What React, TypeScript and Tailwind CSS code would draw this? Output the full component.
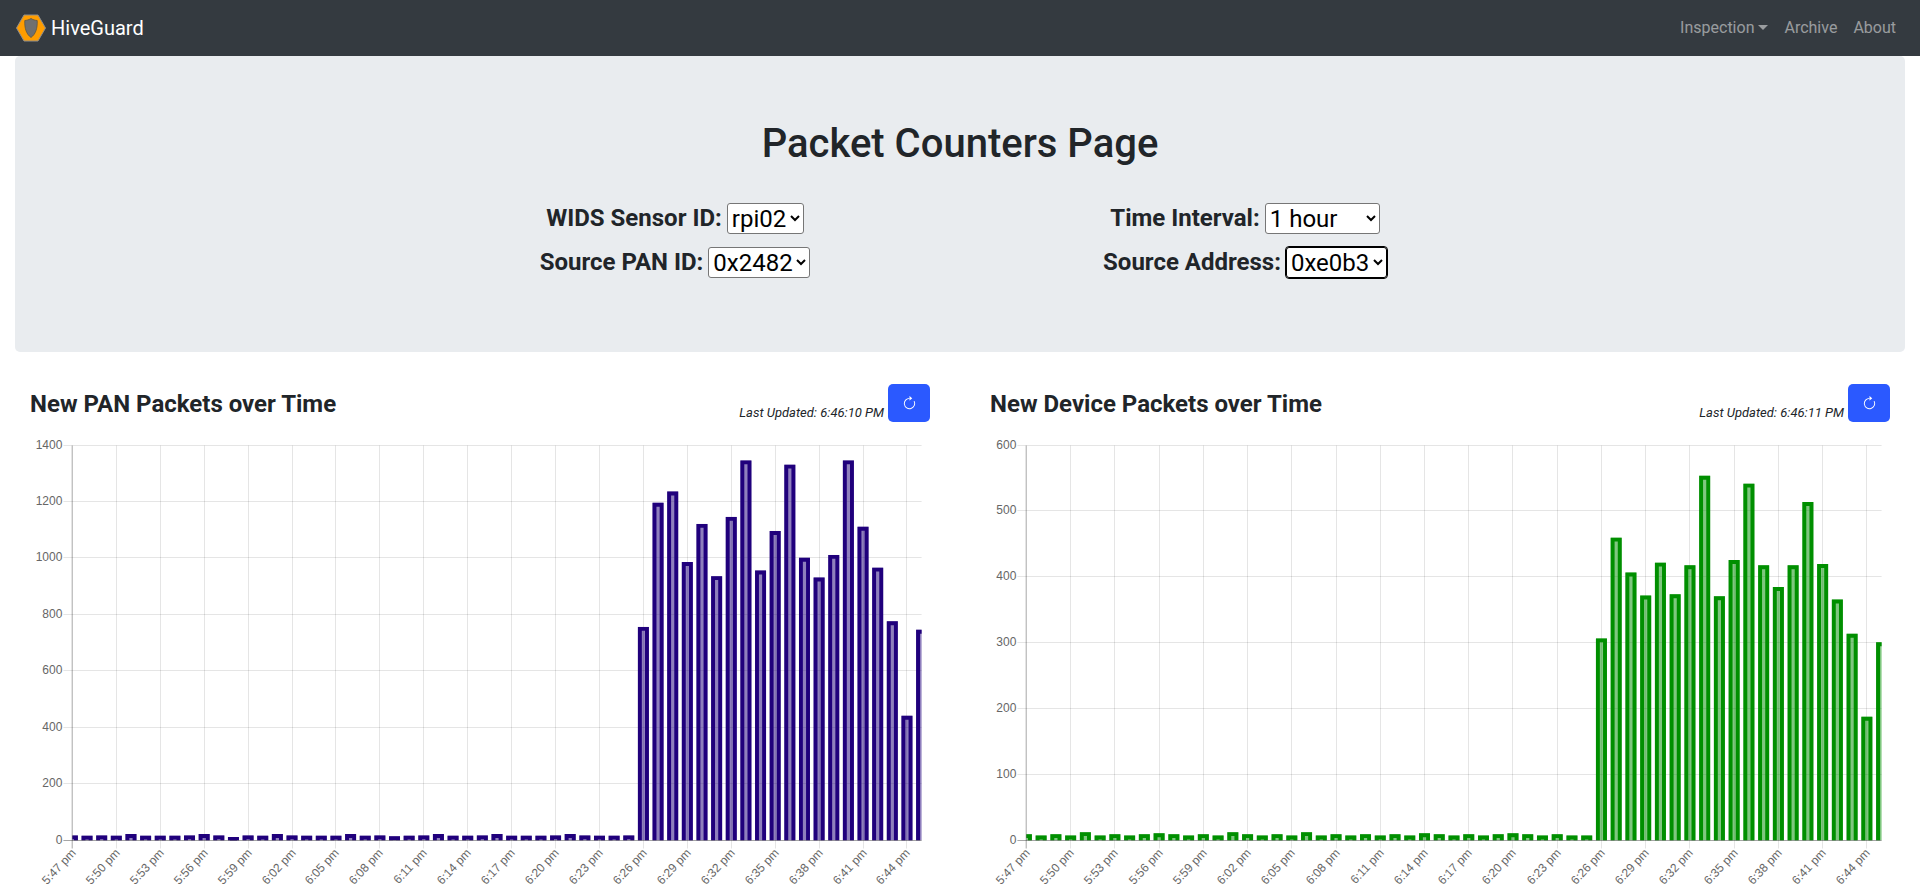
import { BsArrowClockwise } from "react-icons/bs";

type ChartProps = {
  title: string;
  updated: string;
  values: number[];
  max: number;
  step: number;
  axisX: number;
  color: string;
  fill: string;
  id: string;
};

const panValues = [
  18, 17, 18, 17, 23, 17, 17, 17, 18, 23, 18, 12, 18, 17, 23, 18, 17, 17, 17, 23, 17, 18, 15, 17, 18, 23, 17, 17,
  18, 23, 17, 17, 17, 18, 23, 18, 17, 17, 18, 757, 1197, 1237, 987, 1122, 937, 1147, 1347, 957, 1097, 1332, 1002,
  932, 1012, 1347, 1112, 967, 777, 442, 747,
];

const deviceValues = [
  9.6, 7.6, 9.6, 7.6, 12.6, 7.6, 9.6, 7.6, 9.6, 11, 9.6, 7.6, 9.6, 7.6, 12.6, 9.6, 7.6, 9.6, 7.6, 12.6, 7.6, 9.6,
  7.6, 9.6, 7.6, 9.6, 7.6, 11, 9.6, 7.6, 9.6, 7.6, 9.6, 11, 9.6, 7.6, 9.6, 7.6, 7.6, 307, 460, 407, 372, 422, 374,
  418, 554, 371, 426, 542, 418, 385, 418, 514, 420, 366, 314, 188, 301,
];

const TOP = 15.5;
const BOTTOM = 410.5;
const RIGHT = 891.6;

const timeLabel = (index: number) => {
  const total = 47 + index;
  if (total < 60) return `5:${String(total).padStart(2, "0")} pm`;
  return `6:${String(total - 60).padStart(2, "0")} pm`;
};

const PacketChart = ({ title, updated, values, max, step, axisX, color, fill, id }: ChartProps) => {
  const slot = (RIGHT - axisX) / (values.length - 1);
  const yTicks: number[] = [];
  for (let v = 0; v <= max; v += step) yTicks.push(v);
  const toY = (v: number) => BOTTOM - (v / max) * (BOTTOM - TOP);

  return (
    <div className="w-1/2 px-[30px]">
      <div className="flex h-[38px] items-end justify-between">
        <h3 className="mt-[2px] self-center text-2xl font-bold text-[#212529]">{title}</h3>
        <div className="flex items-end gap-[4px]">
          <span className="text-[13px] italic leading-[18px] text-[#212529]">Last Updated: {updated}</span>
          <button type="button" className="flex h-[38px] w-[42px] items-center justify-center rounded-[5px] bg-[#2b59ff] text-white">
            <BsArrowClockwise size={15} />
          </button>
        </div>
      </div>
      <svg width={900} height={470} className="mt-[8px] block font-['Liberation_Sans',sans-serif]">
        <defs>
          <clipPath id={id}>
            <rect x={axisX} y={0} width={RIGHT - axisX} height={BOTTOM} />
          </clipPath>
        </defs>
        {yTicks.map((v) => {
          const y = Math.floor(toY(v) - 0.5) + 0.5;
          return (
            <g key={v}>
              {v > 0 && <line x1={axisX - 9} x2={RIGHT} y1={y} y2={y} stroke="rgba(0,0,0,0.1)" />}
              <text x={axisX - 10} y={y + 3.5} textAnchor="end" className="fill-[#666666] text-xs">
                {v}
              </text>
            </g>
          );
        })}
        {values.map((_, i) => {
          if (i % 3 !== 0) return null;
          const x = Math.round(axisX + i * slot - 0.5) + 0.5;
          return (
            <g key={i}>
              {i > 0 && <line x1={x} x2={x} y1={TOP} y2={BOTTOM + 8} stroke="rgba(0,0,0,0.1)" />}
              <text
                x={x + 4}
                y={BOTTOM + 13}
                textAnchor="end"
                transform={`rotate(-47 ${x + 4} ${BOTTOM + 13})`}
                className="fill-[#666666] text-xs"
              >
                {timeLabel(i)}
              </text>
            </g>
          );
        })}
        <g clipPath={`url(#${id})`}>
          {values.map((v, i) => {
            const cx = axisX + i * slot;
            const y = toY(v);
            const left = cx - 5.5;
            const w = 11;
            return (
              <g key={i}>
                <rect x={left} y={y} width={w} height={BOTTOM - y} fill={fill} />
                <path
                  d={`M${left + 1.95} ${BOTTOM} V${y + 1.95} H${left + w - 1.95} V${BOTTOM}`}
                  fill="none"
                  stroke={color}
                  strokeWidth={3.9}
                />
              </g>
            );
          })}
        </g>
        <line x1={axisX - 0.2} x2={axisX - 0.2} y1={TOP} y2={BOTTOM + 8} stroke="rgba(0,0,0,0.35)" />
        <line x1={axisX - 9} x2={RIGHT} y1={BOTTOM} y2={BOTTOM} stroke="rgba(0,0,0,0.35)" />
      </svg>
    </div>
  );
};

const FilterField = ({ label, value, options, width, focused }: { label: string; value: string; options: string[]; width?: string; focused?: boolean }) => (
  <div className="flex h-[44px] items-start justify-center gap-[5px] pt-[1px]">
    <label className="text-2xl font-bold leading-[31px] text-[#212529]">{label}</label>
    <select
      defaultValue={value}
      className={`h-[31px] rounded-[3px] border bg-white text-2xl leading-[29px] text-black ${width ?? ""} ${
        focused ? "border-black outline-1 outline-black" : "border-[#767676]"
      }`}
    >
      {options.map((option) => (
        <option key={option}>{option}</option>
      ))}
    </select>
  </div>
);

export default function App() {
  return (
    <div className="h-screen overflow-hidden bg-white font-['Roboto',sans-serif]">
      <nav className="flex h-[56px] items-center justify-between bg-[#343a40] px-[16px]">
        <a className="flex items-center gap-[5px] text-xl text-white" href="#">
          <svg width={30} height={28} viewBox="0 0 30 28">
            <path d="M8 1H22L29.5 14L22 27H8L0.5 14Z" fill="#ff9d00" stroke="#8d8d8d" strokeWidth={1} />
            <path d="M15 4.5C17 5.8 19 6.3 21.2 6.5C21.6 14 19.8 20 15 23.5C10.2 20 8.4 14 8.8 6.5C11 6.3 13 5.8 15 4.5Z" fill="#707070" stroke="#5a5546" strokeWidth={0.8} />
          </svg>
          HiveGuard
        </a>
        <div className="flex items-center text-base text-white/50">
          <a className="flex items-center px-[8px]" href="#">
            Inspection
            <span className="ml-[4px] mt-[-1px] border-x-[5px] border-t-[5px] border-x-transparent border-t-white/50" />
          </a>
          <a className="px-[8px]" href="#">
            Archive
          </a>
          <a className="px-[8px]" href="#">
            About
          </a>
        </div>
      </nav>

      <div className="mx-[15px] h-[296px] rounded-[5px] bg-[#e9ecef] pt-[64px]">
        <h1 className="text-center text-[40px] font-medium leading-[48px] text-[#212529]">Packet Counters Page</h1>
        <div className="mx-auto mt-[34px] grid w-[1140px] grid-cols-2">
          <FilterField label="WIDS Sensor ID:" value="rpi02" options={["rpi02"]} />
          <FilterField label="Time Interval:" value="1 hour" options={["1 hour", "1 minute"]} width="w-[115px]" />
          <FilterField label="Source PAN ID:" value="0x2482" options={["0x2482"]} />
          <FilterField label="Source Address:" value="0xe0b3" options={["0xe0b3"]} focused />
        </div>
      </div>

      <div className="flex pt-[32px]">
        <PacketChart
          id="pan-clip"
          title="New PAN Packets over Time"
          updated="6:46:10 PM"
          values={panValues}
          max={1400}
          step={200}
          axisX={42.4}
          color="#20007c"
          fill="rgba(32,0,124,0.5)"
        />
        <PacketChart
          id="device-clip"
          title="New Device Packets over Time"
          updated="6:46:11 PM"
          values={deviceValues}
          max={600}
          step={100}
          axisX={36.4}
          color="#008f00"
          fill="rgba(0,143,0,0.5)"
        />
      </div>
    </div>
  );
}
